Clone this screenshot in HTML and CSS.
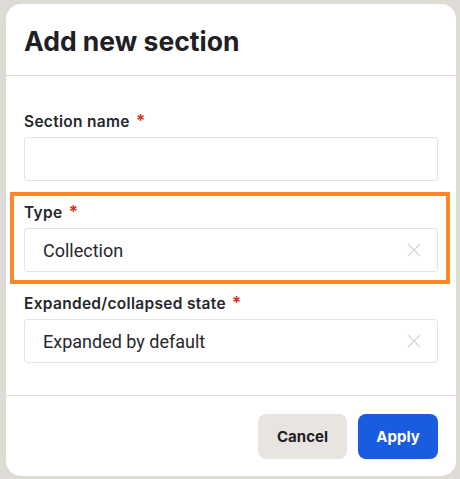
FILE: index.html
```html
<!DOCTYPE html>
<html>
<head>
<meta charset="utf-8">
<link rel="stylesheet" href="styles.css">
</head>
<body>
<div class="modal">
  <div class="header"><h1 class="title">Add new section</h1></div>
  <div class="content">
    <div class="field">
      <label class="label">Section name <span class="req">*</span></label>
      <div class="input"></div>
    </div>
    <div class="field highlighted">
      <div class="highlight"></div>
      <label class="label">Type <span class="req">*</span></label>
      <div class="input"><span class="value">Collection</span>
        <svg class="clear" width="14" height="14" viewBox="0 0 14 14"><path d="M1 1L13 13M13 1L1 13" stroke="#dcdad7" stroke-width="1.5" fill="none"/></svg>
      </div>
    </div>
    <div class="field">
      <label class="label">Expanded/collapsed state <span class="req">*</span></label>
      <div class="input"><span class="value">Expanded by default</span>
        <svg class="clear" width="14" height="14" viewBox="0 0 14 14"><path d="M1 1L13 13M13 1L1 13" stroke="#dcdad7" stroke-width="1.5" fill="none"/></svg>
      </div>
    </div>
  </div>
  <div class="footer">
    <button class="btn cancel">Cancel</button>
    <button class="btn apply">Apply</button>
  </div>
</div>
</body>
</html>
```
FILE: styles.css
```css
html, body { margin: 0; padding: 0; }
body {
  background: #dedbd6;
  width: 460px;
  height: 479px;
  overflow: hidden;
  font-family: Inter, "Liberation Sans", sans-serif;
}
.modal {
  margin: 4px 0 0 6px;
  width: 450px;
  height: 472px;
  background: #fff;
  border-radius: 15px;
  display: flex;
  flex-direction: column;
  box-sizing: border-box;
}
.header {
  height: 72px;
  border-bottom: 1px solid #dcd9d5;
  padding: 0 18px;
  display: flex;
  align-items: center;
  box-sizing: border-box;
}
.title {
  margin: 0;
  font-size: 26.5px;
  font-weight: 700;
  color: #1f2024;
  padding-top: 2px;
}
.content {
  padding: 35px 18px 0;
  display: flex;
  flex-direction: column;
  gap: 21px;
  flex: 1;
}
.field { display: flex; flex-direction: column; gap: 5px; position: relative; }
.label {
  display: block;
  height: 21px;
  font-size: 15.5px;
  font-weight: 600;
  line-height: 22px;
  color: #26272b;
  letter-spacing: 0.3px;
}
.req { color: #d92d20; font-weight: 600; margin-left: 2px; font-size: 17px; line-height: 0; }
.input {
  height: 44px;
  border: 1px solid #e6e3e0;
  border-radius: 3px;
  box-sizing: border-box;
  display: flex;
  align-items: center;
  justify-content: space-between;
  padding: 0 16px 0 18px;
}
.value {
  font-family: Roboto, "Liberation Sans", sans-serif;
  font-size: 18px;
  color: #26272b;
}
.highlight {
  position: absolute;
  left: -14px;
  right: -12px;
  top: -10px;
  bottom: -12px;
  border: 4px solid #ff862b;
  pointer-events: none;
}
.footer {
  height: 81px;
  border-top: 1px solid #e2dfdb;
  box-sizing: border-box;
  display: flex;
  justify-content: flex-end;
  align-items: flex-start;
  gap: 11px;
  padding: 18px 18px 0;
}
.btn {
  height: 45px;
  border: none;
  border-radius: 8px;
  font-family: Inter, "Liberation Sans", sans-serif;
  font-size: 15px;
  font-weight: 700;
  padding: 0 18px;
}
.cancel { background: #e8e5e1; color: #1f2024; width: 89px; }
.apply { background: #1a5ce0; color: #fff; width: 80px; }
```
